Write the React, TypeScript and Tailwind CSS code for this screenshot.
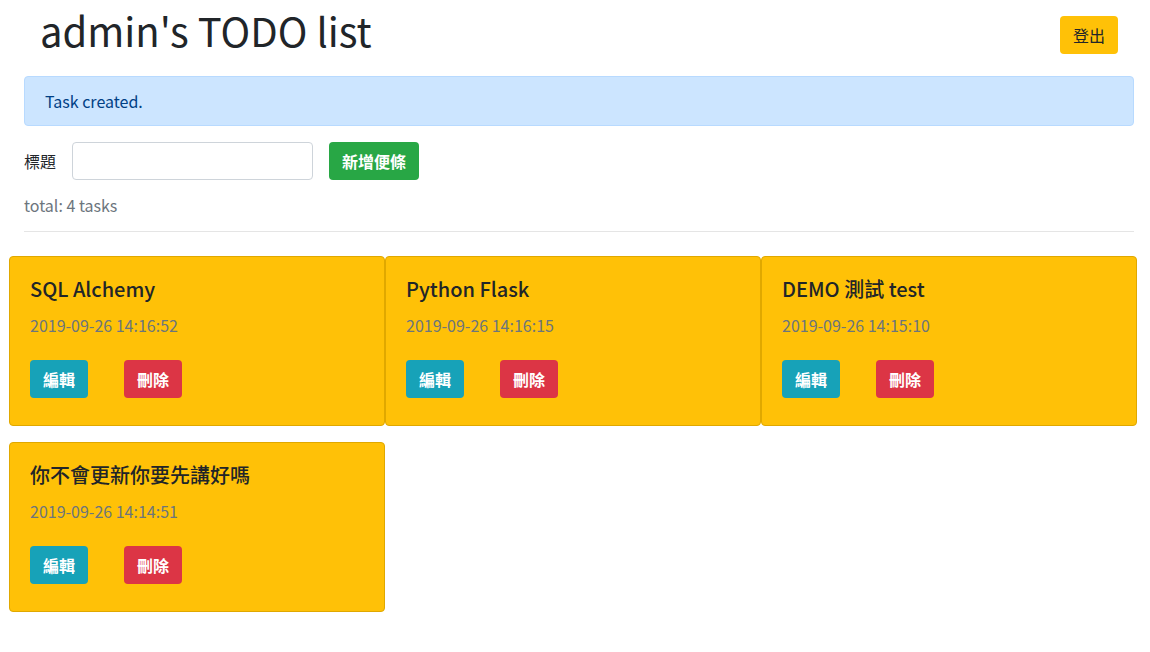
const tasks = [
  { title: "SQL Alchemy", time: "2019-09-26 14:16:52" },
  { title: "Python Flask", time: "2019-09-26 14:16:15" },
  { title: "DEMO 測試 test", time: "2019-09-26 14:15:10" },
  { title: "你不會更新你要先講好嗎", time: "2019-09-26 14:14:51" },
];

const font = { fontFamily: '"Noto Sans CJK TC", "Noto Sans", sans-serif' };

const TaskCard = ({ title, time }: { title: string; time: string }) => (
  <div className="flex h-[170px] flex-col rounded-[4px] border border-[#e0a800] bg-[#ffc107] px-[20px] pt-[20px]">
    <h5 className="text-[20px] font-medium leading-[24px] text-[#212529]">{title}</h5>
    <p className="mt-[12px] text-[16px] leading-[24px] text-[#6c757d]">{time}</p>
    <div className="mt-[23px] flex gap-[36px]">
      <button className="h-[38px] w-[58px] rounded-[4px] bg-[#17a2b8] text-[16px] font-bold text-white">
        編輯
      </button>
      <button className="h-[38px] w-[58px] rounded-[4px] bg-[#dc3545] text-[16px] font-bold text-white">
        刪除
      </button>
    </div>
  </div>
);

export default function App() {
  return (
    <div className="min-h-screen bg-white text-[#212529]" style={font}>
      <div className="flex h-[76px] items-start justify-between">
        <h1 className="ml-[40px] text-[40px] leading-[60px]">admin's TODO list</h1>
        <button className="mr-[32px] mt-[16px] h-[38px] w-[58px] rounded-[4px] bg-[#ffc107] text-[16px] text-[#212529]">
          登出
        </button>
      </div>

      <div className="ml-[24px] w-[1110px] rounded-[4px] border border-[#b8daff] bg-[#cce5ff] px-[20px] py-[12px] text-[16px] leading-[24px] text-[#004085]">
        Task created.
      </div>

      <form className="ml-[24px] mt-[16px] flex items-center" onSubmit={(e) => e.preventDefault()}>
        <label htmlFor="title" className="text-[16px] leading-[24px]">
          標題
        </label>
        <input
          id="title"
          type="text"
          className="ml-[16px] h-[38px] w-[241px] rounded-[4px] border border-[#ced4da] px-[12px] outline-none"
        />
        <button
          type="submit"
          className="ml-[16px] h-[38px] w-[90px] rounded-[4px] bg-[#28a745] text-[16px] font-bold text-white"
        >
          新增便條
        </button>
      </form>

      <p className="ml-[24px] mt-[13px] text-[16px] leading-[24px] text-[#6c757d]">total: 4 tasks</p>
      <hr className="ml-[24px] mt-[14px] w-[1110px] border-t border-[#e5e5e5]" />

      <div className="ml-[9px] mt-[24px] grid w-[1128px] grid-cols-3 gap-y-[16px]">
        {tasks.map((t) => (
          <TaskCard key={t.time} title={t.title} time={t.time} />
        ))}
      </div>
    </div>
  );
}
